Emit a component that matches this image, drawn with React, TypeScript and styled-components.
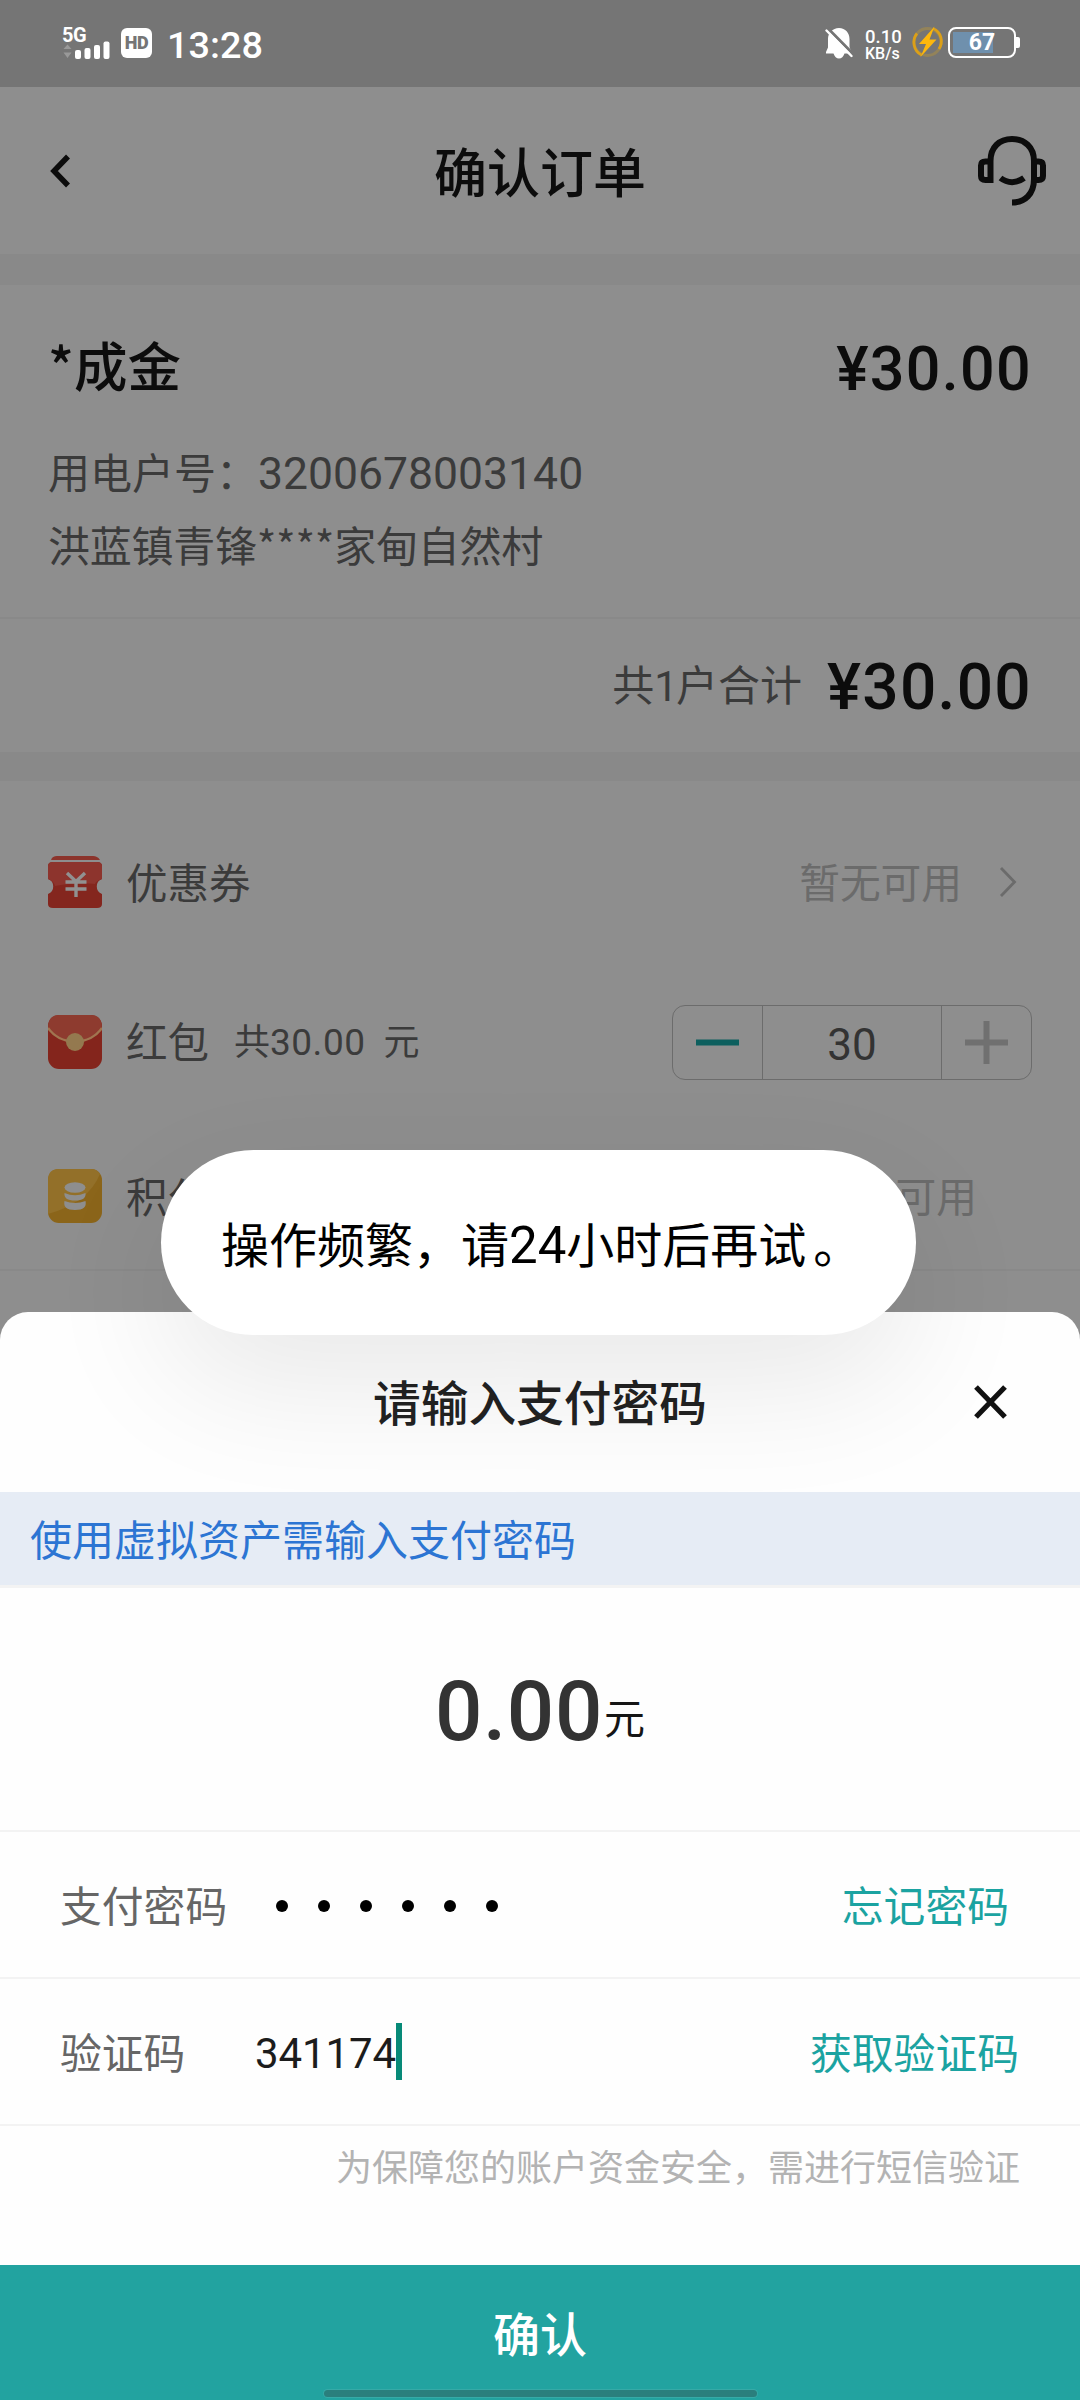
import React from 'react';
import styled, { createGlobalStyle } from 'styled-components';

const cjk = "'Noto Sans CJK SC', sans-serif";

const Global = createGlobalStyle`
  * { box-sizing: border-box; }
  body { margin: 0; background: #8e8e8e; font-family: Roboto, ${cjk}; }
`;

const Screen = styled.div`
  position: relative;
  width: 1080px;
  height: 2400px;
  overflow: hidden;
  background: #8e8e8e;
  display: flex;
  flex-direction: column;
`;

const StatusBar = styled.header`
  height: 87px;
  background: #757575;
  color: #fff;
  display: flex;
  justify-content: space-between;
  padding: 0 60px 0 62px;
`;
const StatusGroup = styled.div`
  display: flex;
  align-items: flex-start;
`;
const Signal = styled.div`
  width: 59px;
  padding-top: 27px;
  font: 700 20px/17px Roboto, sans-serif;
  letter-spacing: -0.5px;
  svg { display: block; margin-top: -3px; }
`;
const HdBadge = styled.div`
  width: 31px;
  height: 30px;
  margin-top: 28px;
  border-radius: 6px;
  background: #fff;
  color: #757575;
  font: 900 18px/30px Roboto, sans-serif;
  text-align: center;
  letter-spacing: -0.5px;
`;
const Clock = styled.div`
  margin: 24px 0 0 15px;
  font: 500 37.8px/43px Roboto, sans-serif;
`;
const NetSpeed = styled.div`
  width: 46px;
  padding-top: 29px;
  font: 500 18.5px/17px Roboto, sans-serif;
  small { display: block; font-size: 16px; line-height: 16px; }
`;
const BellSlot = styled.div`
  width: 40px;
  padding-top: 27px;
`;
const BoltSlot = styled.div`
  width: 37px;
  padding-top: 25px;
`;
const Battery = styled.div`
  position: relative;
  width: 68px;
  height: 31px;
  margin: 27px 4px 0 0;
  border: 2px solid #fff;
  border-radius: 8px;
  font: 700 23px/28px Roboto, sans-serif;
  text-align: center;
  background: linear-gradient(#6f90ad, #6f90ad) 3px 3px / 40px 21px no-repeat;
  &::after {
    content: '';
    position: absolute;
    right: -6px;
    top: 8px;
    width: 4px;
    height: 11px;
    border-radius: 0 2px 2px 0;
    background: #fff;
  }
`;

const NavBar = styled.nav`
  height: 167px;
  padding: 0 32px 0 49px;
  display: grid;
  grid-template-columns: 72px 1fr 72px;
  align-items: center;
  h1 {
    margin: 0 0 2px -17px;
    font: 500 53px/70px ${cjk};
    text-align: center;
    color: #0c0c0c;
  }
`;
const Gap = styled.div<{ $h: number }>`
  height: ${(p) => p.$h}px;
  background: #898989;
`;

const OrderCard = styled.section`
  height: 334px;
  padding: 43px 50px 0 48px;
  border-bottom: 2px solid #898989;
`;
const Spread = styled.div`
  display: flex;
  justify-content: space-between;
  align-items: flex-start;
`;
const Name = styled.h2`
  margin: 0;
  font: 500 53.5px/72px ${cjk};
  color: #0c0c0c;
`;
const Price = styled.span<{ $size: number }>`
  padding-top: 5px;
  font: 500 ${(p) => p.$size}px/72px Roboto, sans-serif;
  letter-spacing: 1.3px;
  margin-right: -2px;
  color: #0c0c0c;
`;
const Detail = styled.p<{ $top: number; $track?: number }>`
  margin: ${(p) => p.$top}px 0 0;
  height: 60px;
  font: 400 42px/60px ${cjk};
  letter-spacing: ${(p) => p.$track ?? 0}px;
  color: #3b3b3b;
  white-space: nowrap;
  span { font: 400 44.5px/60px Roboto, sans-serif; }
`;
const Total = styled.section`
  height: 133px;
  padding: 0 50px 0 0;
  display: flex;
  justify-content: flex-end;
  align-items: center;
  gap: 25px;
  color: #3b3b3b;
  font: 400 42px/60px ${cjk};
  i { font: 400 42px/60px Roboto, sans-serif; margin-right: -2px; }
`;
const TotalLabel = styled.span`
  padding-bottom: 2px;
`;

const Options = styled.section`
  border-bottom: 2px solid #898989;
  height: 490px;
  padding: 22px 48px 0;
`;
const OptionRow = styled.div<{ $h: number }>`
  height: ${(p) => p.$h}px;
  display: flex;
  align-items: center;
  font: 400 41.5px/60px ${cjk};
  color: #3b3b3b;
  svg { flex: none; }
`;
const OptionName = styled.span`
  margin-left: 24px;
  padding-bottom: 3px;
`;
const Extra = styled.span`
  margin-left: 25px;
  padding-bottom: 2px;
  font-size: 36px;
  white-space: pre;
  b { font: 400 37px/60px Roboto, sans-serif; letter-spacing: 0.5px; }
  em { font-style: normal; margin-left: 2px; }
`;
const Unavailable = styled.span<{ $right: number }>`
  margin-left: auto;
  margin-right: ${(p) => p.$right}px;
  padding-bottom: 3px;
  font-size: 40.7px;
  color: #6b6b6b;
`;
const Stepper = styled.div`
  margin-left: auto;
  margin-top: 1px;
  width: 360px;
  height: 75px;
  border: 1px solid #6c6c6c;
  border-radius: 13px;
  display: grid;
  grid-template-columns: 90px 179px 1fr;
  text-align: center;
  font: 400 44px/70px Roboto, sans-serif;
  color: #333;
`;
const StepCell = styled.div<{ $ruled?: boolean }>`
  display: flex;
  align-items: center;
  justify-content: center;
  height: 73px;
  border-right: ${(p) => (p.$ruled ? '1px solid #6c6c6c' : '0')};
`;
const StepValue = styled(StepCell)`
  padding-top: 6px;
`;

const Sheet = styled.section`
  position: absolute;
  left: 0;
  right: 0;
  bottom: 0;
  height: 1088px;
  background: #fefefe;
  border-radius: 28px 28px 0 0;
  display: flex;
  flex-direction: column;
`;
const SheetHead = styled.div`
  height: 180px;
  display: grid;
  grid-template-columns: 106px 1fr 106px;
  align-items: center;
  h2 {
    margin: 0 0 2px;
    text-align: center;
    font: 500 47.7px/64px ${cjk};
    color: #222;
  }
`;
const Notice = styled.div`
  height: 96px;
  background: #e6ecf5;
  border-bottom: 3px solid #f3f3f3;
  padding-left: 30px;
  font: 400 42px/92px ${cjk};
  color: #2c75d3;
`;
const Amount = styled.div`
  height: 244px;
  border-bottom: 2px solid #f3f3f3;
  display: flex;
  justify-content: center;
  align-items: baseline;
  padding-top: 75px;
  font: 500 83.5px/97px Roboto, sans-serif;
  color: #333;
  letter-spacing: 0.6px;
  small {
    position: relative;
    top: -6px;
    font: 400 41px/60px ${cjk};
    color: #151515;
    letter-spacing: 0;
    margin-left: 1px;
  }
`;
const Field = styled.div`
  height: 147px;
  border-bottom: 2px solid #f3f3f3;
  display: flex;
  align-items: center;
  font: 400 41.8px/60px ${cjk};
`;
const FieldLabel = styled.label`
  width: 195px;
  margin-left: 60px;
  padding-bottom: 1px;
  flex: none;
  color: #666;
`;
const Dots = styled.div`
  display: flex;
  gap: 30px;
  margin: 3px 0 0 21px;
  i { width: 12px; height: 12px; border-radius: 50%; background: #000; }
`;
const CodeInput = styled.div`
  display: flex;
  align-items: center;
  padding-top: 5px;
  font: 400 42px/58px Roboto, sans-serif;
  color: #1c1c1c;
  letter-spacing: -0.1px;
  &::after {
    content: '';
    width: 6px;
    height: 57px;
    margin-top: -5px;
    background: #078a78;
  }
`;
const Action = styled.span<{ $right: number }>`
  margin-left: auto;
  margin-right: ${(p) => p.$right}px;
  padding-bottom: 1px;
  color: #1ba3a1;
`;
const Hint = styled.p`
  margin: 0;
  height: 139px;
  padding: 13px 60px 0 0;
  text-align: right;
  font: 400 36px/52px ${cjk};
  color: #b3b3b3;
`;
const Confirm = styled.div`
  flex: 1;
  background: #22a3a0;
  color: #fff;
  display: flex;
  flex-direction: column;
  align-items: center;
  justify-content: space-between;
  padding: 32px 0 3px;
  font: 500 47px/70px ${cjk};
`;
const HomeBar = styled.div`
  width: 433px;
  height: 7px;
  border-radius: 4px;
  background: #2a7f7d;
  box-shadow: 0 0 0 1px #36aaa7;
`;

const Toast = styled.div`
  position: absolute;
  left: 161px;
  top: 1150px;
  width: 755px;
  height: 185px;
  border-radius: 93px;
  background: #fff;
  box-shadow: 0 50px 130px rgba(0, 0, 0, 0.085);
  display: flex;
  align-items: center;
  padding: 3px 0 0 60px;
  font: 400 48px/70px ${cjk};
  color: #000;
  white-space: nowrap;
  span { font: 400 51px/70px Roboto, sans-serif; }
  em { font-style: normal; margin-left: 7px; }
`;

const SignalBars = () => (
  <svg width="49" height="18" viewBox="0 0 49 18">
    <path d="M1.500 7.500L5.500 3L9.500 7.500ZM1.500 11L5.500 16.500L9.500 11Z" fill="#999" transform="translate(0 .5)" />
    <g fill="#fff">
      <rect x="13" y="9" width="6" height="9" rx="2" />
      <rect x="22.500" y="7" width="6" height="11" rx="2" />
      <rect x="32" y="4" width="6" height="14" rx="2" />
      <rect x="41.500" y="0.500" width="6" height="17.500" rx="2" />
    </g>
  </svg>
);

const BellOff = () => (
  <svg width="28" height="33" viewBox="0 0 28 33">
    <path d="M14 1C7.500 1 3 6 3 12V20.500L1 25V26.500H8.500C9.500 29.500 11.500 31.500 14 31.500C16.500 31.500 18.500 29.500 19.500 26.500H27L24.500 20V12C24.500 6 20.500 1 14 1Z" fill="#fff" />
    <path d="M3 1.500L28 27" stroke="#757575" strokeWidth="3" />
    <path d="M1.500 3.500L26.500 29" stroke="#fff" strokeWidth="2.400" strokeLinecap="round" />
  </svg>
);

const Bolt = () => (
  <svg width="34" height="34" viewBox="0 0 34 34" fill="none">
    <circle cx="16.500" cy="17" r="13.500" stroke="#93835a" strokeWidth="3" />
    <path d="M10.500 30C2.500 26 .5 15 6 8.500M22 3.500C30.500 7 32.500 17 28 24" stroke="#dca018" strokeWidth="2.800" />
    <path d="M23.500 1.500L8 19H15L9.500 32L25.500 14.500H18.500Z" fill="#fdb70c" />
  </svg>
);

const Headset = () => (
  <svg width="72" height="74" viewBox="0 0 72 74" fill="none" stroke="#0c0c0c" strokeWidth="6">
    <path d="M14.500 49V27C14.500 13 23.500 5 36 5C48.500 5 58 13 58 27V45C58 60 49 68.500 36 68.500" />
    <path d="M14 27.500H9.500C6.500 27.500 5 29 5 31.500V42C5 44.500 6.500 46 9.500 46H16M58 27.500H62.500C65.500 27.500 67 29 67 31.500V42C67 44.500 65.500 46 62.500 46H57" />
    <path d="M24.500 44C31.500 49.500 40.500 49.500 48 44" />
  </svg>
);

const CouponIcon = () => (
  <svg width="54" height="54" viewBox="0 0 54 54">
    <path d="M3 5C4 2 6 1 9 1H45C48 1 50 2 52 5Z" fill="#8c342c" />
    <path d="M5 7H49Q54 7 54 11V24A8 8 0 0 0 54 39V49Q54 53 49 53H5Q0 53 0 49V39A8 8 0 0 0 0 24V11Q0 7 5 7Z" fill="#84261e" />
    <path d="M5 7H49Q54 7 54 11V24Q48 26 47 29Q30 27 7 31Q6 26 0 24V11Q0 7 5 7Z" fill="#8d342d" />
    <path d="M19 18L28 26.500L37 18M17.500 27H38.500M17.500 34H38.500M28 26V42" stroke="#919191" strokeWidth="3.400" fill="none" />
  </svg>
);

const PacketIcon = () => (
  <svg width="54" height="54" viewBox="0 0 54 54">
    <rect width="54" height="54" rx="11" fill="#84251c" />
    <path d="M0 13Q0 0 11 0H43Q54 0 54 13Q45 26 27 27Q9 26 0 13Z" fill="#8e3b2f" />
    <path d="M0 13Q9 26 27 27Q45 26 54 13" stroke="#a07550" strokeWidth="2.400" fill="none" />
    <circle cx="27" cy="27" r="9" fill="#94794f" />
  </svg>
);

const PointsIcon = () => (
  <svg width="54" height="54" viewBox="0 0 54 54">
    <rect width="54" height="54" rx="11" fill="#8b651a" />
    <path d="M11 0H43Q49 0 52 5Q40 34 0 45V11Q0 0 11 0Z" fill="#937029" />
    <g fill="#8e8e8e">
      <ellipse cx="27" cy="18.500" rx="10.500" ry="5.200" />
      <path d="M16.500 24Q27 28.500 37.500 24Q38.500 31.500 27 31.500Q15.500 31.500 16.500 24Z" />
      <path d="M16.500 32Q27 36 37.500 32Q39.500 41 27 41Q14.500 41 16.500 32Z" />
    </g>
  </svg>
);

export default function App() {
  return (
    <>
      <Global />
      <Screen>
        <StatusBar>
          <StatusGroup>
            <Signal>5G<SignalBars /></Signal>
            <HdBadge>HD</HdBadge>
            <Clock>13:28</Clock>
          </StatusGroup>
          <StatusGroup>
            <BellSlot><BellOff /></BellSlot>
            <NetSpeed>0.10<small>KB/s</small></NetSpeed>
            <BoltSlot><Bolt /></BoltSlot>
            <Battery>67</Battery>
          </StatusGroup>
        </StatusBar>
        <NavBar>
          <svg width="24" height="36" viewBox="0 0 24 36" fill="none">
            <path d="M19 3.500L5 18L19 32.500" stroke="#0c0c0c" strokeWidth="5.500" />
          </svg>
          <h1>确认订单</h1>
          <Headset />
        </NavBar>
        <Gap $h={31} />
        <OrderCard>
          <Spread>
            <Name>*成金</Name>
            <Price $size={61}>¥30.00</Price>
          </Spread>
          <Detail $top={36}>用电户号：<span>3200678003140</span></Detail>
          <Detail $top={13} $track={-0.25}>洪蓝镇青锋****家甸自然村</Detail>
        </OrderCard>
        <Total>
          <TotalLabel>共<i>1</i>户合计</TotalLabel>
          <Price $size={64}>¥30.00</Price>
        </Total>
        <Gap $h={29} />
        <Options>
          <OptionRow $h={158}>
            <CouponIcon />
            <OptionName>优惠券</OptionName>
            <Unavailable $right={37}>暂无可用</Unavailable>
            <svg width="33" height="34" viewBox="0 0 33 34" fill="none">
              <path d="M2 3L15.500 17L2 31" stroke="#6b6b6b" strokeWidth="2.800" />
            </svg>
          </OptionRow>
          <OptionRow $h={161}>
            <PacketIcon />
            <OptionName>红包</OptionName>
            <Extra>共<b>30.00</b>{'  '}<em>元</em></Extra>
            <Stepper>
              <StepCell $ruled>
                <svg width="44" height="44"><path d="M0 22.500H43" stroke="#0d5f5e" strokeWidth="6" /></svg>
              </StepCell>
              <StepValue $ruled>30</StepValue>
              <StepCell>
                <svg width="44" height="44"><path d="M0 22.500H43M21.500 1V44" stroke="#707070" strokeWidth="6" /></svg>
              </StepCell>
            </Stepper>
          </OptionRow>
          <OptionRow $h={148}>
            <PointsIcon />
            <OptionName>积分</OptionName>
            <Unavailable $right={55}>可用</Unavailable>
          </OptionRow>
        </Options>

        <Sheet>
          <SheetHead>
            <span />
            <h2>请输入支付密码</h2>
            <svg width="34" height="34" viewBox="0 0 34 34">
              <path d="M2 2L31 32M31 2L2 32" stroke="#111" strokeWidth="5.200" />
            </svg>
          </SheetHead>
          <Notice>使用虚拟资产需输入支付密码</Notice>
          <Amount>0.00<small>元</small></Amount>
          <Field>
            <FieldLabel>支付密码</FieldLabel>
            <Dots><i /><i /><i /><i /><i /><i /></Dots>
            <Action $right={71}>忘记密码</Action>
          </Field>
          <Field>
            <FieldLabel>验证码</FieldLabel>
            <CodeInput>341174</CodeInput>
            <Action $right={61}>获取验证码</Action>
          </Field>
          <Hint>为保障您的账户资金安全，需进行短信验证</Hint>
          <Confirm>
            确认
            <HomeBar />
          </Confirm>
        </Sheet>

        <Toast><div>操作频繁，请<span>24</span>小时后再试<em>。</em></div></Toast>
      </Screen>
    </>
  );
}
